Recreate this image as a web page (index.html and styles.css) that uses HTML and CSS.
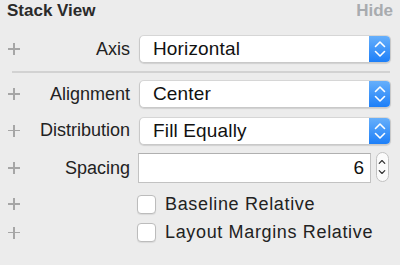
FILE: index.html
```html
<!DOCTYPE html>
<html lang="en">
<head>
    <meta charset="UTF-8">
    <meta name="viewport" content="width=device-width, initial-scale=1.0">
    <title>Stack View</title>
    <link rel="stylesheet" href="styles.css">
</head>
<body>

    <div class="panel">
        <div class="header">
            <span class="title">Stack View</span>
            <span class="hide">Hide</span>
        </div>

        <div class="row">
            <span class="plus"></span>
            <label>Axis</label>
            <div class="popup">
                <span>Horizontal</span>
                <span class="arrows">
                    <svg width="22" height="28" viewBox="0 0 22 28"><path d="M6.5 11.5 L11 7 L15.5 11.5 M6.5 16.5 L11 21 L15.5 16.5" fill="none" stroke="#fff" stroke-width="1.6" stroke-linecap="round" stroke-linejoin="round"/></svg>
                </span>
            </div>
        </div>

        <div class="separator"></div>

        <div class="row">
            <span class="plus"></span>
            <label>Alignment</label>
            <div class="popup">
                <span>Center</span>
                <span class="arrows">
                    <svg width="22" height="28" viewBox="0 0 22 28"><path d="M6.5 11.5 L11 7 L15.5 11.5 M6.5 16.5 L11 21 L15.5 16.5" fill="none" stroke="#fff" stroke-width="1.6" stroke-linecap="round" stroke-linejoin="round"/></svg>
                </span>
            </div>
        </div>

        <div class="row">
            <span class="plus"></span>
            <label>Distribution</label>
            <div class="popup">
                <span>Fill Equally</span>
                <span class="arrows">
                    <svg width="22" height="28" viewBox="0 0 22 28"><path d="M6.5 11.5 L11 7 L15.5 11.5 M6.5 16.5 L11 21 L15.5 16.5" fill="none" stroke="#fff" stroke-width="1.6" stroke-linecap="round" stroke-linejoin="round"/></svg>
                </span>
            </div>
        </div>

        <div class="row">
            <span class="plus"></span>
            <label>Spacing</label>
            <div class="number">
                <div class="field">6</div>
                <span class="stepper">
                    <svg width="13" height="30" viewBox="0 0 13 30"><path d="M3.5 11 L6.5 8 L9.5 11 M3.5 19 L6.5 22 L9.5 19" fill="none" stroke="#333" stroke-width="1.3" stroke-linecap="round" stroke-linejoin="round"/></svg>
                </span>
            </div>
        </div>

        <div class="row check first">
            <span class="plus"></span>
            <span></span>
            <div class="checkbox"><span class="box"></span>Baseline Relative</div>
        </div>

        <div class="row check">
            <span class="plus"></span>
            <span></span>
            <div class="checkbox"><span class="box"></span>Layout Margins Relative</div>
        </div>
    </div>

</body>
</html>
```

FILE: styles.css
```css
body {
    margin: 0;
    padding: 0;
    background-color: #ececec;
    font-family: 'Liberation Sans', Arial, sans-serif;
    color: #222;
}
.panel {
    display: flex;
    flex-direction: column;
    width: 400px;
    height: 265px;
    padding: 1px 9px 0 8px;
    box-sizing: border-box;
}
.header {
    display: flex;
    justify-content: space-between;
    height: 20px;
    line-height: 20px;
    margin: 0 -2px 14px -1px;
    font-size: 17px;
    font-weight: bold;
}
.title {
    color: #2a2a2a;
}
.hide {
    color: #a8abaf;
}
.row {
    display: grid;
    grid-template-columns: 12px 101px 1fr;
    column-gap: 9px;
    align-items: center;
    height: 28px;
    margin-bottom: 8.5px;
}
.row label {
    text-align: right;
    font-size: 18px;
    color: #222;
}
.plus {
    position: relative;
    width: 12px;
    height: 12px;
}
.plus::before, .plus::after {
    content: "";
    position: absolute;
    background-color: #a6a6a6;
}
.plus::before {
    left: 0;
    top: 5px;
    width: 12px;
    height: 1.5px;
}
.plus::after {
    left: 5.25px;
    top: 0;
    width: 1.5px;
    height: 12px;
}
.separator {
    height: 2px;
    background-color: #d2d2d2;
    margin: -0.5px 1px 7px 4px;
}
.popup {
    display: flex;
    justify-content: space-between;
    align-items: center;
    height: 28px;
    box-sizing: border-box;
    background-color: #fff;
    border: 1px solid #c9c9c9;
    border-top-color: #d6d6d6;
    border-radius: 5px;
    box-shadow: 0 1px 1px rgba(0, 0, 0, 0.12);
    padding-left: 13px;
    font-size: 19px;
    letter-spacing: 0.15px;
    color: #111;
    overflow: hidden;
}
.arrows {
    display: flex;
    width: 22px;
    height: 28px;
    margin: -1px -1px -1px 0;
    background: linear-gradient(#69b1fb, #1a7df8);
    border-radius: 0 5px 5px 0;
}
.number {
    display: flex;
    align-items: center;
    gap: 5px;
}
.field {
    flex: 1;
    height: 30px;
    line-height: 28px;
    box-sizing: border-box;
    margin-left: -1px;
    background-color: #fff;
    border: 1px solid #c2c2c2;
    border-top-color: #b0b0b0;
    padding-right: 6px;
    text-align: right;
    font-size: 19px;
    color: #111;
}
.stepper {
    display: flex;
    width: 13px;
    height: 30px;
    box-sizing: border-box;
    border: 1px solid #c2c2c2;
    border-radius: 7px;
    background-color: #fbfbfb;
    margin-right: 2px;
    margin-top: -3px;
}
.stepper svg {
    margin-left: -1px;
    margin-top: -1px;
}
.row.check {
    height: 20px;
}
.row.check.first {
    margin-top: 4px;
}
.checkbox {
    display: flex;
    align-items: center;
    gap: 9px;
    margin-left: -2px;
    font-size: 18px;
    letter-spacing: 0.65px;
    color: #222;
}
.box {
    width: 19px;
    height: 19px;
    box-sizing: border-box;
    background-color: #fff;
    border: 1px solid #bcbcbc;
    border-radius: 4px;
    box-shadow: 0 1px 1px rgba(0, 0, 0, 0.08);
}
```
